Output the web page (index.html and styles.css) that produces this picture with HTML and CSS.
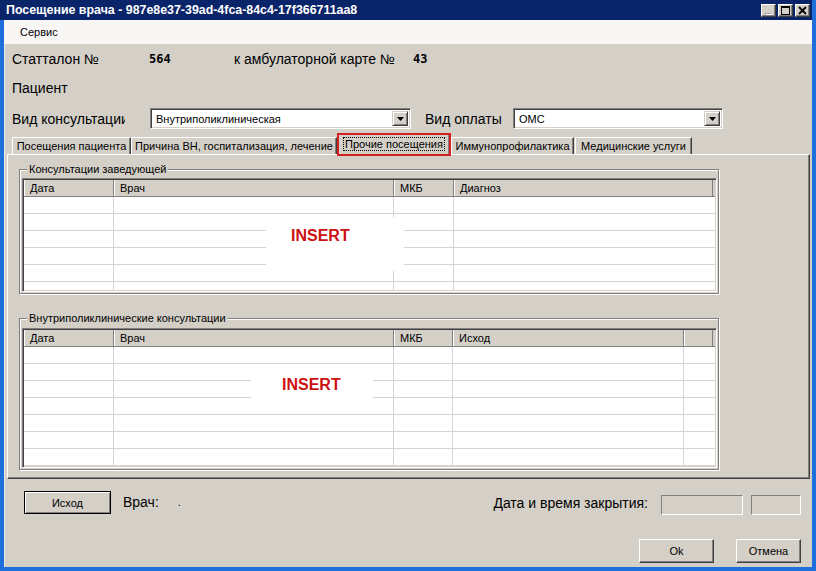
FILE: index.html
```html
<!DOCTYPE html>
<html lang="ru">
<head>
<meta charset="utf-8">
<title>Посещение врача</title>
<link rel="stylesheet" href="styles.css">
</head>
<body>
<div class="window">
  <div class="titlebar">
    <span class="title">Посещение врача - 987e8e37-39ad-4fca-84c4-17f366711aa8</span>
    <div class="tb-buttons">
      <span class="tbb tbb-min"><svg width="13" height="11" viewBox="0 0 13 11"><rect x="3" y="8" width="6" height="2" fill="#a0a0a0"/><rect x="4" y="9" width="6" height="1" fill="#fff"/></svg></span>
      <span class="tbb tbb-max"><svg width="13" height="11" viewBox="0 0 13 11"><rect x="2.5" y="1.5" width="8" height="8" fill="none" stroke="#000"/><rect x="2" y="1" width="9" height="2" fill="#000"/></svg></span>
      <span class="tbb tbb-close"><svg width="13" height="11" viewBox="0 0 13 11"><path d="M3 2 L10 9 M10 2 L3 9" stroke="#000" stroke-width="1.8"/></svg></span>
    </div>
  </div>
  <div class="frame">
    <div class="menubar"><span class="menu-item">Сервис</span></div>
    <div class="content">
      <div class="row row1">
        <span class="big-lbl w-stat">Статталон №</span>
        <span class="big-val w-564">564</span>
        <span class="big-lbl w-card">к амбулаторной карте №</span>
        <span class="big-val">43</span>
      </div>
      <div class="row row2">
        <span class="big-lbl">Пациент</span>
      </div>
      <div class="row row3">
        <span class="big-lbl w-kind">Вид консультации</span>
        <div class="combo combo-kind"><span class="combo-text">Внутриполиклиническая</span><span class="combo-btn"><svg width="7" height="4" viewBox="0 0 7 4"><path d="M0 0 H7 L3.5 4 Z" fill="#000"/></svg></span></div>
        <span class="big-lbl w-pay">Вид оплаты</span>
        <div class="combo combo-pay"><span class="combo-text">ОМС</span><span class="combo-btn"><svg width="7" height="4" viewBox="0 0 7 4"><path d="M0 0 H7 L3.5 4 Z" fill="#000"/></svg></span></div>
      </div>
      <div class="tabs">
        <span class="tab t1">Посещения пациента</span>
        <span class="tab t2">Причина ВН, госпитализация, лечение</span>
        <span class="tab tab-sel t3"><span class="focus">Прочие посещения</span></span>
        <span class="tab t4">Иммунопрофилактика</span>
        <span class="tab t5">Медицинские услуги</span>
      </div>
      <div class="panel">
        <div class="group group1">
          <span class="legend">Консультации заведующей</span>
          <div class="grid grid1">
            <div class="g-head"><span class="hc c1">Дата</span><span class="hc c2">Врач</span><span class="hc c3">МКБ</span><span class="hc c4">Диагноз</span></div>
            <div class="g-row"><span class="bc c1"></span><span class="bc c2"></span><span class="bc c3"></span><span class="bc c4"></span></div>
            <div class="g-row"><span class="bc c1"></span><span class="bc c2"></span><span class="bc c3"></span><span class="bc c4"></span></div>
            <div class="g-row"><span class="bc c1"></span><span class="bc c2"></span><span class="bc c3"></span><span class="bc c4"></span></div>
            <div class="g-row"><span class="bc c1"></span><span class="bc c2"></span><span class="bc c3"></span><span class="bc c4"></span></div>
            <div class="g-row"><span class="bc c1"></span><span class="bc c2"></span><span class="bc c3"></span><span class="bc c4"></span></div>
            <div class="g-row"><span class="bc c1"></span><span class="bc c2"></span><span class="bc c3"></span><span class="bc c4"></span></div>
            <div class="insert insert1">INSERT</div>
          </div>
        </div>
        <div class="group group2">
          <span class="legend">Внутриполиклинические консультации</span>
          <div class="grid grid2">
            <div class="g-head"><span class="hc c1">Дата</span><span class="hc c2">Врач</span><span class="hc c3b">МКБ</span><span class="hc c4b">Исход</span><span class="hc c5"></span></div>
            <div class="g-row"><span class="bc c1"></span><span class="bc c2"></span><span class="bc c3b"></span><span class="bc c4b"></span><span class="bc c5"></span></div>
            <div class="g-row"><span class="bc c1"></span><span class="bc c2"></span><span class="bc c3b"></span><span class="bc c4b"></span><span class="bc c5"></span></div>
            <div class="g-row"><span class="bc c1"></span><span class="bc c2"></span><span class="bc c3b"></span><span class="bc c4b"></span><span class="bc c5"></span></div>
            <div class="g-row"><span class="bc c1"></span><span class="bc c2"></span><span class="bc c3b"></span><span class="bc c4b"></span><span class="bc c5"></span></div>
            <div class="g-row"><span class="bc c1"></span><span class="bc c2"></span><span class="bc c3b"></span><span class="bc c4b"></span><span class="bc c5"></span></div>
            <div class="g-row"><span class="bc c1"></span><span class="bc c2"></span><span class="bc c3b"></span><span class="bc c4b"></span><span class="bc c5"></span></div>
            <div class="g-row"><span class="bc c1"></span><span class="bc c2"></span><span class="bc c3b"></span><span class="bc c4b"></span><span class="bc c5"></span></div>
            <div class="insert insert2">INSERT</div>
          </div>
        </div>
      </div>
      <div class="bottom">
        <div class="brow brow1">
          <span class="btn btn-outcome">Исход</span>
          <span class="big-lbl doc-lbl">Врач:</span>
          <span class="doc-val">.</span>
          <span class="big-lbl close-lbl">Дата и время закрытия:</span>
          <span class="field field-date"></span>
          <span class="field field-time"></span>
        </div>
        <div class="brow brow2">
          <span class="btn btn-ok">Ok</span>
          <span class="btn btn-cancel">Отмена</span>
        </div>
      </div>
    </div>
  </div>
</div>
</body>
</html>
```

FILE: styles.css
```css
* { box-sizing: border-box; }
html, body { margin: 0; padding: 0; }
body {
  font-family: "Liberation Sans", Arial, sans-serif;
  font-size: 11px;
  color: #000;
  background: #1e6fdc;
}
.window {
  width: 816px;
  height: 571px;
  display: flex;
  flex-direction: column;
  background: #1e6fdc;
  overflow: hidden;
}
.titlebar {
  height: 20px;
  width: 812px;
  background: #0a246a;
  display: flex;
  align-items: center;
  padding-left: 6px;
}
.title {
  color: #fff;
  font-weight: bold;
  font-size: 12.4px;
  white-space: nowrap;
}
.tb-buttons {
  margin-left: auto;
  display: flex;
  gap: 2px;
  margin-right: 2px;
  margin-top: 1px;
}
.tbb {
  width: 15px;
  height: 13px;
  background: #d4d0c8;
  border: 1px solid;
  border-color: #fff #404040 #404040 #fff;
  box-shadow: inset -1px -1px 0 #808080;
  display: flex;
  align-items: center;
  justify-content: center;
}
.frame {
  flex: 1;
  margin: 0 4px 4px 4px;
  background: #d4d0c8;
  display: flex;
  flex-direction: column;
  box-shadow: inset 1px 0 0 #e8e8e8;
}
.menubar {
  height: 24px;
  background: #f9f6f6;
  display: flex;
  align-items: center;
  padding-left: 16px;
}
.menu-item { font-size: 11px; }
.content {
  flex: 1;
  display: flex;
  flex-direction: column;
  padding: 0 2px 0 2px;
}
.row {
  display: flex;
  align-items: center;
  padding-left: 6px;
  white-space: nowrap;
}
.row1 { margin-top: 6px; height: 18px; }
.row2 { margin-top: 11px; height: 18px; }
.row3 { margin-top: 11px; height: 21px; }
.big-lbl {
  font-size: 14px;
  white-space: nowrap;
}
.big-val {
  font-size: 12px;
  font-weight: bold;
  font-family: "DejaVu Sans Mono", "Liberation Mono", monospace;
}
.w-stat { width: 137px; }
.w-564 { width: 85px; }
.w-card { width: 179px; }
.w-kind { width: 113px; overflow: hidden; margin-right: 25px; }
.w-pay { margin-left: 14px; width: 88px; }
.combo {
  display: flex;
  align-items: stretch;
  height: 21px;
  background: #fff;
  border: 1px solid;
  border-color: #808080 #fff #fff #808080;
  box-shadow: inset 1px 1px 0 #404040, inset -1px -1px 0 #d4d0c8;
  padding: 2px;
}
.combo-kind { width: 261px; }
.combo-pay { width: 210px; }
.combo-text {
  flex: 1;
  padding-left: 3px;
  display: flex;
  align-items: center;
  font-size: 11px;
}
.combo-btn {
  width: 16px;
  background: #d4d0c8;
  border: 1px solid;
  border-color: #d4d0c8 #404040 #404040 #d4d0c8;
  box-shadow: inset 1px 1px 0 #fff, inset -1px -1px 0 #808080;
  display: flex;
  align-items: center;
  justify-content: center;
}
.tabs {
  margin-top: 4px;
  height: 21px;
  display: flex;
  align-items: flex-end;
  padding-left: 6px;
  position: relative;
  z-index: 2;
}
.tab {
  height: 17px;
  display: flex;
  align-items: center;
  justify-content: center;
  border-left: 1px solid #fff;
  border-top: 1px solid #fff;
  border-right: 1px solid #404040;
  box-shadow: inset -1px 0 0 #808080;
  white-space: nowrap;
  font-size: 11px;
}
.t1 { width: 119px; }
.t2 { width: 206px; }
.t3 { width: 112px; }
.t4 { width: 123px; margin-left: 1px; }
.t5 { width: 117px; margin-left: 1px; }
.tab-sel {
  height: 21px;
  margin-bottom: -1px;
  background: #d4d0c8;
  margin-left: 1px;
  outline: 2px solid #d42020;
  outline-offset: -1px;
  align-items: flex-start;
  padding-top: 2px;
}
.focus {
  border: 1px dotted #000;
  padding: 0 1px;
  line-height: 12px;
}
.panel {
  margin-left: 1px;
  width: 803px;
  height: 325px;
  border: 1px solid;
  border-color: #fff #404040 #404040 #fff;
  box-shadow: inset -1px -1px 0 #808080;
  padding: 14px 0 0 11px;
  display: flex;
  flex-direction: column;
}
.group {
  position: relative;
  width: 700px;
  border: 1px solid #808080;
  box-shadow: inset 1px 1px 0 #fff, 1px 1px 0 #fff;
  padding: 8px 1px 1px 2px;
}
.group1 { height: 125px; }
.group2 { height: 152px; margin-top: 24px; padding-top: 9px; }
.legend {
  position: absolute;
  top: -8px;
  left: 7px;
  background: #d4d0c8;
  padding: 0 2px;
  font-size: 11px;
  line-height: 14px;
  white-space: nowrap;
}
.grid {
  position: relative;
  width: 695px;
  height: 100%;
  background: #fff;
  border: 1px solid;
  border-color: #808080 #fff #fff #808080;
  box-shadow: inset 1px 1px 0 #404040, inset -1px -1px 0 #d4d0c8;
  padding: 1px;
  overflow: hidden;
}
.g-head {
  display: flex;
  height: 17px;
  background: #d4d0c8;
  border-bottom: 1px solid #808080;
}
.hc {
  height: 100%;
  border-right: 1px solid #808080;
  box-shadow: inset 1px 0 0 #fff;
  padding-left: 6px;
  display: flex;
  align-items: center;
  font-size: 11px;
  white-space: nowrap;
}
.g-row {
  display: flex;
  height: 17px;
  border-bottom: 1px solid #d4d4d4;
}
.bc {
  height: 100%;
  border-right: 1px solid #d4d4d4;
}
.c1 { width: 90px; }
.c2 { width: 280px; }
.c3 { width: 60px; }
.c4 { flex: 1; border-right: none; }
.c3b { width: 59px; }
.c4b { width: 231px; }
.c5 { flex: 1; border-right: none; }
.g-head .c4, .g-head .c5 { border-right: 1px solid #808080; flex: none; width: 259px; }
.g-head .c5 { width: 29px; }
.insert {
  position: absolute;
  background: #fff;
  color: #cc1111;
  font-weight: bold;
  font-size: 16px;
  line-height: 18px;
  font-family: "Liberation Sans", Arial, sans-serif;
  display: flex;
}
.insert1 {
  left: 243px;
  top: 38px;
  width: 138px;
  height: 54px;
  padding-left: 25px;
  padding-top: 10px;
}
.insert2 {
  left: 228px;
  top: 36px;
  width: 122px;
  height: 42px;
  padding-left: 31px;
  padding-top: 11px;
}
.bottom {
  flex: 1;
  display: flex;
  flex-direction: column;
}
.brow {
  display: flex;
  align-items: flex-start;
}
.brow1 { margin-top: 12px; height: 24px; padding-left: 18px; padding-right: 9px; }
.brow2 { margin-top: 24px; justify-content: flex-end; padding-right: 9px; gap: 22px; }
.btn {
  display: flex;
  align-items: center;
  justify-content: center;
  background: #d4d0c8;
  font-size: 11px;
}
.btn-outcome {
  width: 87px;
  height: 23px;
  border: 1px solid #000;
  box-shadow: inset 1px 1px 0 #fff, inset -1px -1px 0 #808080;
}
.doc-lbl { margin-left: 12px; margin-top: 3px; }
.doc-val { margin-left: 19px; margin-top: 5px; }
.close-lbl { margin-left: auto; margin-top: 4px; }
.field {
  height: 20px;
  margin-top: 4px;
  background: #d4d0c8;
  border: 1px solid;
  border-color: #808080 #fff #fff #808080;
}
.field-date { width: 82px; margin-left: 13px; }
.field-time { width: 50px; margin-left: 8px; }
.btn-ok, .btn-cancel {
  height: 24px;
  border: 1px solid;
  border-color: #fff #404040 #404040 #fff;
  box-shadow: inset -1px -1px 0 #808080;
}
.btn-ok { width: 75px; }
.btn-cancel { width: 65px; }
```
